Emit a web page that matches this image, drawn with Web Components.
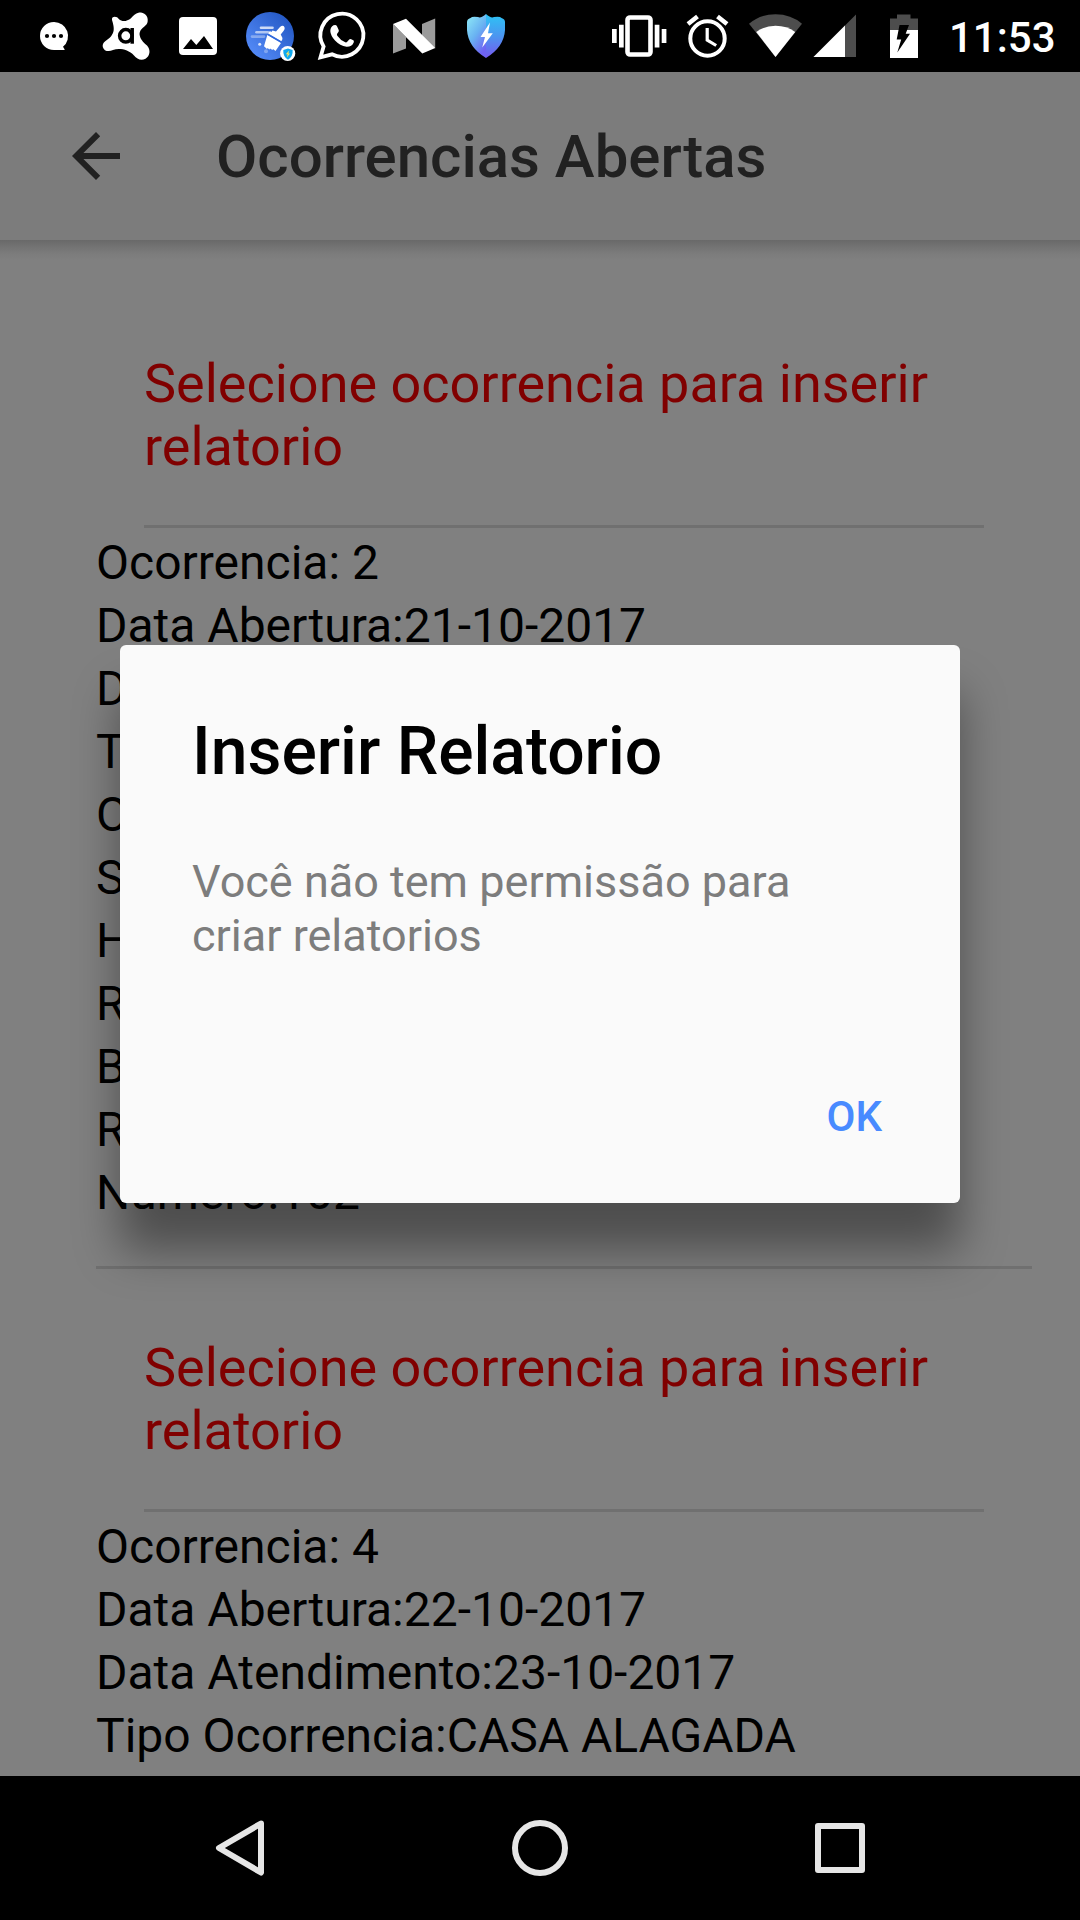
<!DOCTYPE html>
<html lang="pt">
<head>
<meta charset="utf-8">
<title>Ocorrencias Abertas</title>
<style>
html,body{margin:0;height:100%;background:#000}
body{font-family:Roboto,"Noto Sans",sans-serif;overflow:hidden}
</style>
</head>
<body>
<app-screen>
  <status-bar slot="status" time="11:53"></status-bar>
  <app-toolbar slot="header">Ocorrencias Abertas</app-toolbar>
  <ocorrencia-card>
    <span slot="title">Selecione ocorrencia para inserir relatorio</span>
    <div>Ocorrencia: 2</div>
    <div>Data Abertura:21-10-2017</div>
    <div>D</div>
    <div>T</div>
    <div>O</div>
    <div>S</div>
    <div>H</div>
    <div>R</div>
    <div>B</div>
    <div>R</div>
    <div>Numero:102</div>
  </ocorrencia-card>
  <ocorrencia-card>
    <span slot="title">Selecione ocorrencia para inserir relatorio</span>
    <div>Ocorrencia: 4</div>
    <div>Data Abertura:22-10-2017</div>
    <div>Data Atendimento:23-10-2017</div>
    <div>Tipo Ocorrencia:CASA ALAGADA</div>
  </ocorrencia-card>
  <alert-dialog slot="overlay" action="OK">
    <span slot="title">Inserir Relatorio</span>
    Você não tem permissão para criar relatorios
  </alert-dialog>
  <nav-bar slot="nav"></nav-bar>
</app-screen>
<script>
const define = (name, html, setup) => {
  const tpl = document.createElement('template');
  tpl.innerHTML = html;
  customElements.define(name, class extends HTMLElement {
    constructor() {
      super();
      this.attachShadow({mode: 'open'}).append(tpl.content.cloneNode(true));
    }
    connectedCallback() { if (setup) setup(this, this.shadowRoot); }
  });
};

define('app-screen', `
<style>
:host{display:flex;flex-direction:column;width:1080px;height:1920px;background:#000}
.page{flex:1;min-height:0;position:relative;display:flex;flex-direction:column;background:#808080}
main{flex:1;min-height:0;overflow:hidden;padding:48px 48px 0}
</style>
<slot name="status"></slot>
<div class="page"><slot name="header"></slot><main><slot></slot></main><slot name="overlay"></slot></div>
<slot name="nav"></slot>`);

define('status-bar', `
<style>
:host{display:block;height:72px;background:#000;color:#fff}
.bar{display:flex;height:72px;align-items:center}
svg{display:block;flex:none}
time{font-size:42px;font-weight:500;line-height:72px;margin-left:19px;padding-top:4px}
</style>
<div class="bar">
<svg width="930" height="72" viewBox="0 0 930 72" fill="#fff">
  <defs>
    <linearGradient id="clean" x1="0" y1="1" x2="1" y2="0"><stop offset="0" stop-color="#5b92ff"/><stop offset="1" stop-color="#1d51bd"/></linearGradient>
    <linearGradient id="shL" x1="0" y1="0" x2=".6" y2="1"><stop offset="0" stop-color="#90edf7"/><stop offset=".55" stop-color="#69b2f2"/><stop offset="1" stop-color="#6f63f3"/></linearGradient>
    <linearGradient id="shR" x1=".3" y1="0" x2=".3" y2="1"><stop offset="0" stop-color="#2cc4f5"/><stop offset=".5" stop-color="#4b96f0"/><stop offset="1" stop-color="#7659f0"/></linearGradient>
  </defs>
  <!-- message bubble -->
  <path d="M54 22A14 14 0 1 0 54 50H64.5Q65 50 64.4 49L63 46.8A14 14 0 0 0 54 22Z"/>
  <g fill="#000"><circle cx="47" cy="36" r="2.1"/><circle cx="54" cy="36" r="2.1"/><circle cx="61" cy="36" r="2.1"/></g>
  <!-- antivirus -->
  <path d="M112 20C111 16 117 15.5 119 19.2C122 22 127 21.5 131 18.2C134 15 136 12.5 141 12.5C146 13 149 18 147.300 23C145.500 27 140 28 139.500 34C140 39 143 42 147 45.500C151 50 150 56 145.500 58.700C141 61 137 59 134 55.500C128 49 119 48 113 50C109 52 104 51.500 102.800 47C102 42 107 40.500 110 37.500C114 33 114 30 113.500 26Q113 23 112 20Z"/>
  <g fill="none" stroke="#000" stroke-width="3.500"><circle cx="125.800" cy="35.800" r="6.200"/><path d="M132.200 28V43.700"/></g>
  <!-- picture -->
  <rect x="179" y="17" width="38" height="38" rx="4"/>
  <path fill="#000" d="M183 49L191 39L196.300 45L204 36L213 49Z"/>
  <!-- cleaner -->
  <circle cx="270" cy="36" r="24" fill="url(#clean)"/>
  <g stroke="#fff" stroke-width="2.600" stroke-linecap="round"><path opacity=".75" d="M261 27.700H272.500"/><path opacity=".6" d="M256.500 32.200H268"/><path opacity=".35" d="M252 36.600H264"/></g>
  <circle cx="259.700" cy="44.300" r="1.500" opacity=".8"/><circle cx="266" cy="51.300" r="2" opacity=".3"/>
  <path d="M269.800 31L282.600 38.800L281.400 41.200L268.200 33.600ZM272.500 30.500L276 31.500L280 27Q283 24.500 284.500 27.200Q285.300 29 283.500 31L280.700 34.500L282.500 38L281.500 39.500L271 32.600Z"/>
  <path d="M267.300 35L281 43L275.500 51L273 49L272.500 50L270 48.500L269.500 49.500L267.500 48L267 49L264 46.200Z"/>
  <path stroke="#2f68dc" stroke-width="1.100" d="M268 34.400L281.600 42.300"/>
  <circle cx="287.700" cy="53.500" r="7.600"/>
  <path fill="#10a9ef" d="M288 48.500L292.600 50Q293.200 56.500 288 59.700Q282.800 56.500 283.300 50Z"/><path fill="#ffe45c" d="M289.200 50.500L285.800 54.300H287.700L286.800 57.400L290 53.400H288.300Z"/>
  <!-- phone chat -->
  <path fill="none" stroke="#fff" stroke-width="3.800" d="M320.500 57.300L323.600 46.500A21.500 21.500 0 1 1 332 54.300Z"/>
  <path d="M333.500 25.500Q336.200 24 337.600 26L339.500 30.500Q340 32 337.700 34.500Q337 35.400 338 36.500Q341.500 41.500 346.500 43.500Q347.500 43.800 348.300 43L350.300 40.500Q351 39.700 352.200 40.200L353 39.600Q353.500 39 357 41Q354 41 353 42.600Q358 43.300 353.500 46.500Q352 47.500 350 47Q343 47 337.500 41.500Q331 35.500 330.500 31Q330.500 27 333.500 25.500Z" display="none"/>
  <path d="M333.500 25.300Q336 24.200 337 26.200L338.800 30.300Q339.200 31.800 337.300 33.600Q336.500 34.500 337.300 35.700Q340.500 40.300 345.300 42.300Q346.400 42.700 347.200 41.800L349.200 39.500Q350 38.700 351.200 39.200L353.300 40.300Q354.300 40.900 353.700 42.500Q351.800 47 346.500 46.800Q340 45.800 335 40.500Q330.500 35.500 330.300 31Q330.500 27 333.500 25.300Z"/>
  <!-- N -->
  <path fill="#9b9b9b" d="M393 24L406 37V48.500L393 53.500ZM422 24L435.200 18.500V48.500L422 38Z"/><path d="M393 24L406 18.700L435.200 48L422.300 53.500Z"/>
  <!-- shield -->
  <path fill="url(#shL)" d="M486 14Q481 18.500 478 17Q472 16 470.500 18Q467 19 467 22V30Q468 47 486 58Z"/>
  <path fill="url(#shR)" d="M486 14Q491 18.500 494 17Q500 16 501.500 18Q505 19 505 22V30Q504 47 486 58Z"/>
  <path d="M490 22.500L480.500 37H485L482.200 47.500L492.800 33.200H488Z"/>
  <!-- vibrate -->
  <path d="M612 29h4.700v14h-4.700zM619 24.800h4.700v22.700H619zM654.700 24.800h4.700v22.700h-4.700zM661.700 29h4.700v14h-4.700z"/>
  <rect x="627.500" y="17.500" width="23" height="37" rx="2.500" fill="none" stroke="#fff" stroke-width="4.600"/>
  <!-- alarm -->
  <circle cx="707.500" cy="38.500" r="17.200" fill="none" stroke="#fff" stroke-width="4"/>
  <path fill="none" stroke="#fff" stroke-width="3.200" d="M707.200 28V40L716.200 45.500"/>
  <path fill="none" stroke="#fff" stroke-width="4.500" d="M688 24L697.500 16.500M727 24L717.500 16.500"/>
  <!-- wifi -->
  <path fill="#4d4d4d" d="M749 23.700Q760 14.200 775.500 14.200Q791 14.200 802 23.700L775.500 57Z"/><path d="M756.200 32Q765 25.700 775.500 25.700Q787 25.700 795.200 32L775.500 57Z"/>
  <!-- signal -->
  <path fill="#4d4d4d" d="M856 14.500V57H813.500Z"/><path d="M845 25.500V57H813.500Z"/>
  <!-- battery -->
  <path fill="#4d4d4d" d="M897 14.500H910.500V18.500H918V31H890V18.500H897Z"/><path d="M890 30H918V58H890Z"/><path fill="#000" d="M899.500 25H909L905.700 33.800H910L897.300 52.500L901.200 39.500H896.700Z"/>
</svg><time></time></div>`, (el, root) => { root.querySelector('time').textContent = el.getAttribute('time'); });

define('app-toolbar', `
<style>
:host{display:block;flex:none;position:relative}
header{display:flex;align-items:center;height:168px;background:#7c7c7c;color:#212121;padding-left:72px}
svg{display:block;margin-right:96px}
h1{margin:0;padding-top:2px;font-size:60px;font-weight:500;line-height:72px}
.shade{position:absolute;left:0;right:0;top:168px;height:20px;background:linear-gradient(#696969,#727272 30%,#7c7c7c 70%,#808080)}
</style>
<header><svg width="48" height="48" viewBox="0 0 16 16" fill="#212121"><path d="M16 7H3.800L9.400 1.400 8 0 0 8l8 8 1.400-1.400L3.800 9H16z"/></svg><h1><slot></slot></h1></header><div class="shade"></div>`);

define('ocorrencia-card', `
<style>
:host{display:block;padding:48px 0 3px 48px;color:#000}
:host(:last-of-type) .end{display:none}
.head{margin:0 48px;border-bottom:3px solid #707070;color:#800000;font-size:54px;line-height:63px;height:189px}
.pad{display:block;padding-top:16px}
.rows{font-size:48px;line-height:63px;padding-top:3px}
.end{height:3px;background:#707070;margin-top:42px}
</style>
<div class="head"><div class="pad"><slot name="title"></slot></div></div>
<div class="rows"><slot></slot></div><div class="end"></div>`);

define('alert-dialog', `
<style>
:host{position:absolute;left:120px;top:573px;width:840px;height:558px;box-sizing:border-box;display:flex;flex-direction:column;padding:68px 72px 24px;background:#fafafa;border-radius:6px;box-shadow:0 48px 46px rgba(0,0,0,.4);color:#000}
h2{margin:0;font-size:66px;font-weight:500;line-height:78px}
p{margin:64px 0 0;font-size:45px;line-height:54px;color:#7d7d7d}
button{align-self:flex-end;margin:auto 6px 37px 0;padding:0;border:0;background:none;font:500 42px/50px Roboto,sans-serif;color:#488aff}
</style>
<h2><slot name="title"></slot></h2><p><slot></slot></p><button></button>`, (el, root) => { root.querySelector('button').textContent = el.getAttribute('action'); });

define('nav-bar', `
<style>
:host{display:flex;flex:none;height:144px;align-items:center;justify-content:center;gap:240px;background:#000}
svg{display:block;fill:none;stroke:#e6e6e6;stroke-width:6;stroke-linejoin:round}
</style>
<svg width="60" height="60"><path d="M51 5.500L9 30 51 54.500Z"/></svg>
<svg width="60" height="60"><circle cx="30" cy="30" r="25"/></svg>
<svg width="60" height="60"><rect x="8" y="8" width="44" height="44"/></svg>`);
</script>
</body>
</html>
